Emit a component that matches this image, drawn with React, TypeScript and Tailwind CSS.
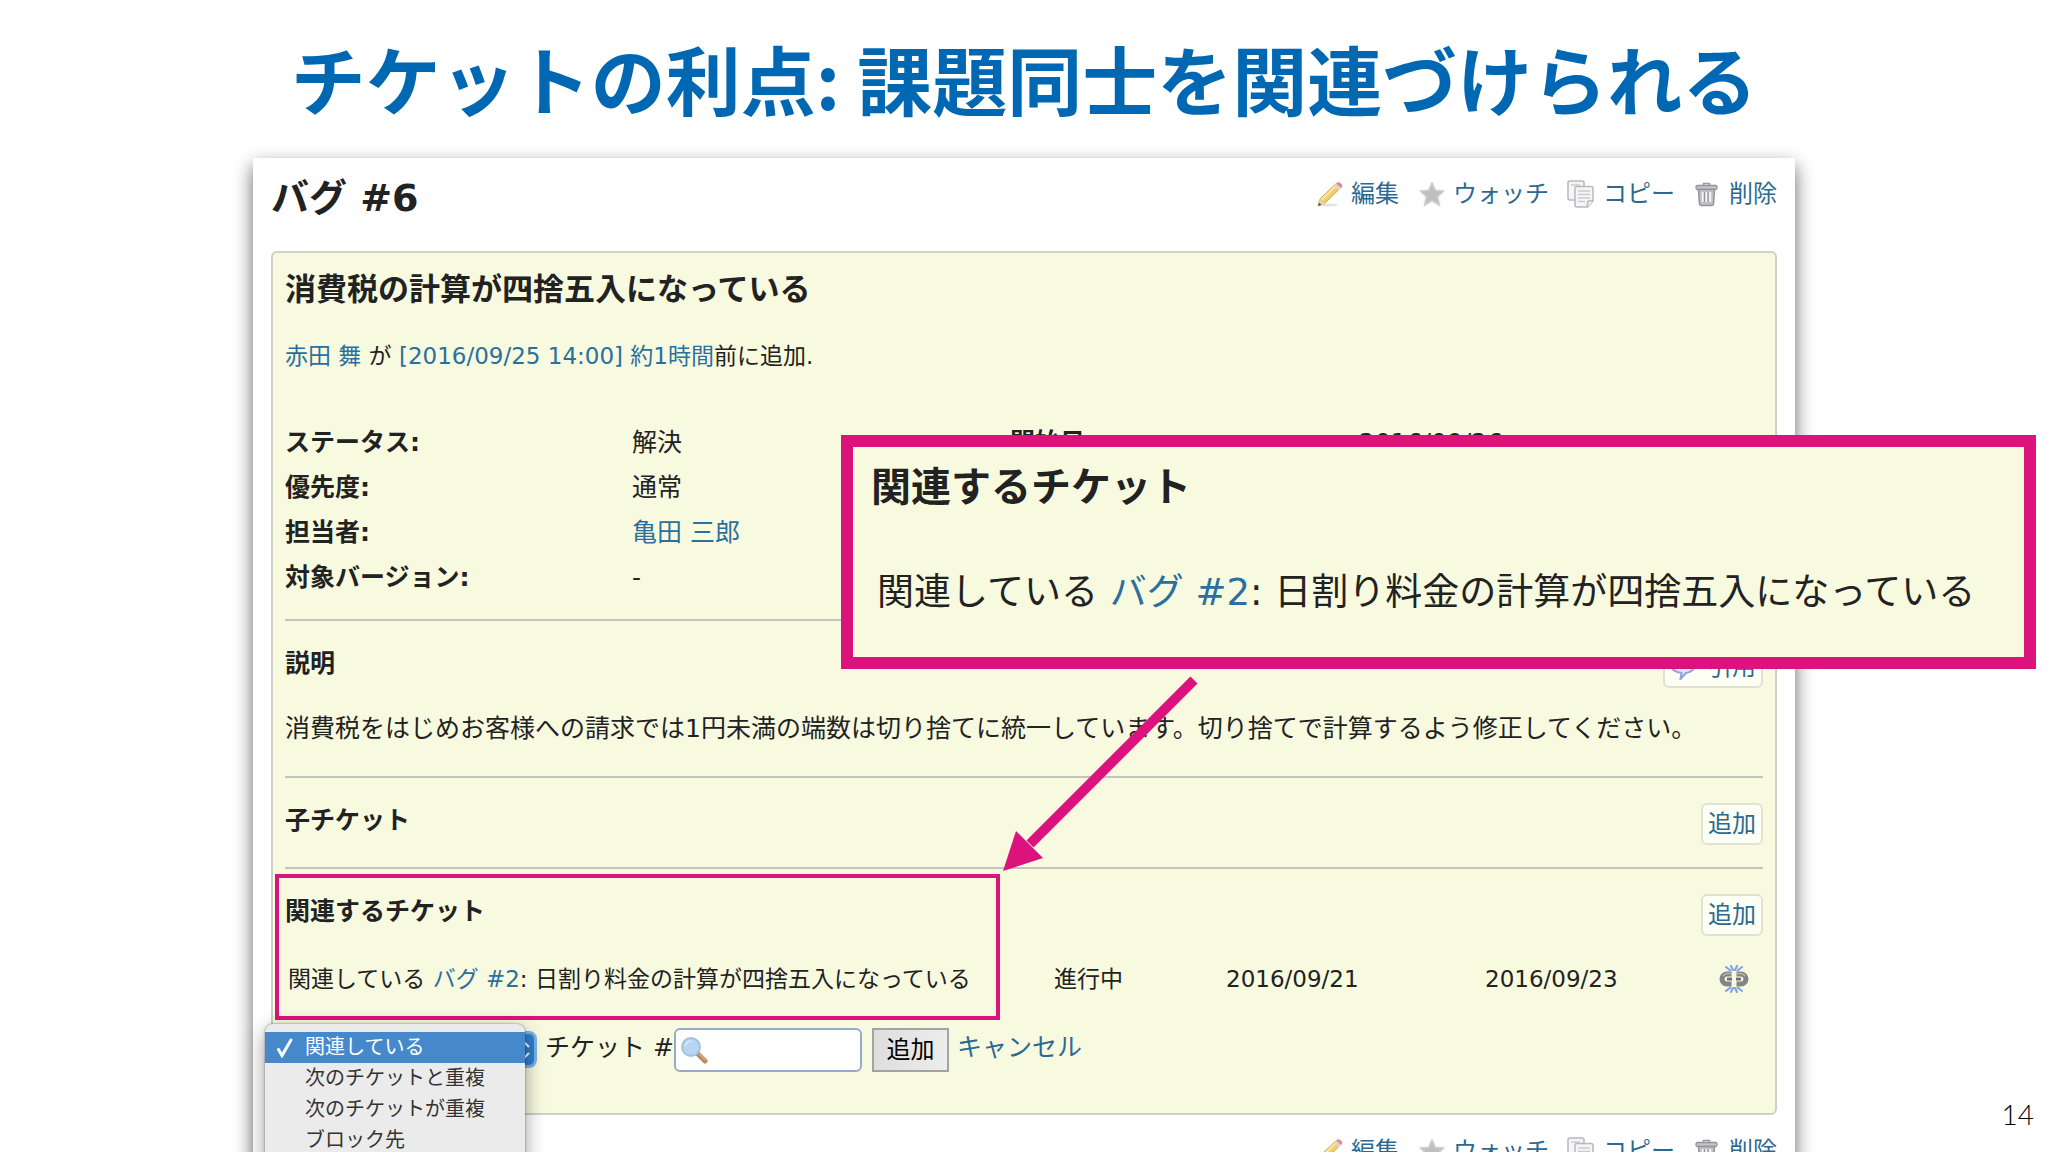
import type { ReactNode } from "react";

const ATTRIBUTES = [
  { label: "ステータス:", value: "解決", label2: "開始日:", value2: "2016/09/26" },
  { label: "優先度:", value: "通常" },
  { label: "担当者:", value: "亀田 三郎", link: true },
  { label: "対象バージョン:", value: "-" },
];

const RELATION_TYPES = [
  "関連している",
  "次のチケットと重複",
  "次のチケットが重複",
  "ブロック先",
];

function PencilIcon() {
  return (
    <svg viewBox="0 0 26 26" className="size-[26px]" aria-hidden="true">
      <ellipse cx="13" cy="24" rx="8" ry="1.5" fill="#e4e2e0" />
      <path d="M1 25l2-7L18.500 3l4.500 4.500L7.500 22.500z" fill="#f0cf66" stroke="#c9a660" />
      <path d="M4.500 19L19 4.500" stroke="#fbe9a0" strokeWidth="2" />
      <path d="M1 25l2-7 4.500 4.500z" fill="#e6d3b0" />
      <path d="M1 25l1-3.500 2.500 2.500z" fill="#5d5a55" />
      <path d="M17 4.500L19 2.500l5 4.500-2.300 2.300z" fill="#d9d5d3" />
      <path d="M19 2.500q1.500-2 3.500-1l2.500 2q1 1.500-.8 3.700z" fill="#f0808a" />
    </svg>
  );
}

function StarIcon() {
  return (
    <svg viewBox="0 0 26 26" className="size-[26px]" aria-hidden="true">
      <path
        d="M13 1.500l3.500 7.700 8.500.8-6.300 5.700 2 8.800L13 19.800l-7.700 4.700 2-8.800L1 10l8.500-.8z"
        fill="#bfbfc1"
        stroke="#d2d2d4"
        strokeWidth="1.500"
        strokeLinejoin="round"
      />
    </svg>
  );
}

function CopyIcon() {
  return (
    <svg viewBox="1 0 26 28" className="h-7 w-[26px] overflow-visible" aria-hidden="true">
      <g fill="#f5f5f6" stroke="#b9b9bc" strokeWidth="1.500">
        <rect x="0" y="1" width="16" height="19" rx="2" />
        <path d="M9 6.500h14a2 2 0 0 1 2 2V21l-5.500 6H9a2 2 0 0 1-2-2V8.500a2 2 0 0 1 2-2z" />
        <path d="M25 21h-4a1.500 1.500 0 0 0-1.500 1.500V27" />
      </g>
      <path d="M10 11h12M10 14.500h12M10 18h12M10 21.500h7M3 5h9" stroke="#cbcbce" strokeWidth="1.300" />
    </svg>
  );
}

function TrashIcon() {
  return (
    <svg viewBox="1.500 0 26 26" className="size-[26px]" aria-hidden="true">
      <path d="M10 4.500V2.500h6v2" fill="none" stroke="#98989e" strokeWidth="1.500" />
      <rect x="2.500" y="4.500" width="21" height="4" rx="1.500" fill="#c5c5c9" stroke="#93939a" strokeWidth="1.300" />
      <path d="M5 8.500h16l-1 14.500a2 2 0 0 1-2 1.500H8A2 2 0 0 1 6 23z" fill="#c0c0c5" stroke="#93939a" strokeWidth="1.500" />
      <path d="M9.300 11v10M13 11v10M16.700 11v10" stroke="#f5f5f6" strokeWidth="2" />
      <path d="M10.800 11v10M14.500 11v10" stroke="#8d8d94" />
    </svg>
  );
}

function CommentIcon() {
  return (
    <svg viewBox="0 0 26 26" className="size-[26px]" aria-hidden="true">
      <path
        d="M13 2c8 0 12 3.500 12 8.500S20 18.500 16 19l-5.500 6 1-6C5 18 1 15.500 1 10.500S5 2 13 2z"
        fill="#dfe4f8"
        stroke="#8fa3dc"
        strokeWidth="2"
      />
    </svg>
  );
}

function UnlinkIcon() {
  return (
    <svg viewBox="0 0 30 28" className="h-7 w-[30px]" aria-hidden="true">
      <g fill="none">
        <path d="M12.500 9H8a5 5 0 0 0 0 10h4.500M17.500 9H22a5 5 0 0 1 0 10h-4.500" stroke="#858585" strokeWidth="5" />
        <path d="M12 8.500H8A5.500 5.500 0 0 0 4 11M18 8.500h4a5.500 5.500 0 0 1 4 2.500" stroke="#b5b5b4" strokeWidth="1.500" />
        <path d="M8 14h5M17 14h5" stroke="#6f6f6f" strokeWidth="3" />
        <path d="M8 12.300h5M17 12.300h5" stroke="#c9c9c5" />
        <path
          d="M11.500 5.500L7 2M14 5l-2-4M16 5l2-4M18.500 5.500L23 2M11.500 22.500L7 26M14 23l-2 4M16 23l2 4M18.500 22.500L23 26"
          stroke="#7ba0e6"
          strokeWidth="2"
          strokeLinecap="round"
        />
      </g>
    </svg>
  );
}

function MagnifierIcon() {
  return (
    <svg viewBox="0 0 28 28" className="size-7" aria-hidden="true">
      <path d="M18 18l7 7" stroke="#b98a63" strokeWidth="5" strokeLinecap="round" />
      <path d="M19.500 18l5.500 5.500" stroke="#dbb08a" strokeWidth="1.500" strokeLinecap="round" />
      <circle cx="11" cy="11" r="9" fill="#b4d6f4" stroke="#a9bfda" strokeWidth="2" />
      <path d="M5.500 10a6 6 0 0 1 6-5" fill="none" stroke="#d8ebfb" strokeWidth="2" />
    </svg>
  );
}

const ACTIONS = [
  { label: "編集", icon: <PencilIcon /> },
  { label: "ウォッチ", icon: <StarIcon /> },
  { label: "コピー", icon: <CopyIcon /> },
  { label: "削除", icon: <TrashIcon /> },
];

function Contextual() {
  return (
    <nav className="flex gap-5 text-2xl leading-12">
      {ACTIONS.map((action) => (
        <a key={action.label} href="#" className="flex items-center gap-2 text-[#2a6a92]">
          {action.icon}
          {action.label}
        </a>
      ))}
    </nav>
  );
}

function SmallButton({ children }: { children: ReactNode }) {
  return (
    <button
      type="button"
      className="flex h-[42px] items-center gap-3 rounded-md border-2 border-[#e0e2cf] bg-[#fdfef4] px-[5px] text-2xl leading-8 text-[#2a6a92]"
    >
      {children}
    </button>
  );
}

function SectionHeader({ title, children }: { title: string; children: ReactNode }) {
  return (
    <div className="flex items-start justify-between">
      <h4 className="text-[25px] leading-9 font-bold">{title}</h4>
      {children}
    </div>
  );
}

function RelatedIssue() {
  return (
    <>
      関連している{" "}
      <a href="#" className="text-[#2a6f9e]">
        バグ #2
      </a>
      : 日割り料金の計算が四捨五入になっている
    </>
  );
}

function RelationForm() {
  return (
    <form className="mt-[33px] flex h-11 text-[25px] leading-10">
      <div className="relative w-[252px]">
        <select
          aria-label="関連の種類"
          className="mt-0.5 h-[37px] w-full appearance-none rounded-lg border-3 border-[#7db3e6] bg-[#2f7fd0] text-xl text-white"
        >
          {RELATION_TYPES.map((type) => (
            <option key={type}>{type}</option>
          ))}
        </select>
        <svg viewBox="0 0 12 20" className="absolute top-3 right-1.5 h-5 w-3" aria-hidden="true">
          <path d="M2 7l4-4 4 4M2 13l4 4 4-4" fill="none" stroke="#fff" strokeWidth="2" />
        </svg>
        <ul className="absolute -top-1 -left-5 z-10 w-[260px] rounded-lg bg-[#ebebeb] pt-2 pb-5 text-xl leading-[31px] text-[#333] shadow-[0_6px_20px_rgba(0,0,0,0.4),0_0_2px_rgba(0,0,0,0.5)]">
          {RELATION_TYPES.map((type, i) => (
            <li
              key={type}
              className={
                i === 0
                  ? "flex items-center bg-[#4589cb] text-white"
                  : "flex items-center"
              }
            >
              <span className="flex w-10 justify-center">
                {i === 0 && (
                  <svg viewBox="0 0 18 20" className="h-5 w-[18px]" aria-hidden="true">
                    <path d="M2.500 11.500l3.500 6L15 2" fill="none" stroke="#fff" strokeWidth="3" strokeLinecap="round" />
                  </svg>
                )}
              </span>
              {type}
            </li>
          ))}
        </ul>
      </div>
      <label htmlFor="issue-to" className="ml-2 whitespace-nowrap">
        チケット #
      </label>
      <span className="relative">
        <input
          id="issue-to"
          className="h-11 w-[188px] rounded-md border-2 border-[#93aacb] bg-white pl-10"
        />
        <span className="absolute top-2 left-1.5">
          <MagnifierIcon />
        </span>
      </span>
      <button
        type="button"
        className="ml-2.5 h-11 w-[77px] border-2 border-[#a3a3a3] bg-linear-to-r from-[#dedede] to-[#ededed] text-2xl leading-10 text-black"
      >
        追加
      </button>
      <a href="#" className="ml-2 text-[#2a6a92]">
        キャンセル
      </a>
    </form>
  );
}

function IssueBox() {
  return (
    <article className="rounded-md border-2 border-[#cfd0c6] bg-[#f8fae0] px-3 pt-4 pb-[41px]">
      <h3 className="text-[31px] leading-10 font-bold">
        消費税の計算が四捨五入になっている
      </h3>
      <p className="mt-[31px] text-[23px] leading-8">
        <a href="#" className="text-[#2a6f9e]">赤田 舞</a> が{" "}
        <a href="#" className="text-[#2a6f9e]">[2016/09/25 14:00]</a>{" "}
        <a href="#" className="text-[#2a6f9e]">約1時間</a>前に追加.
      </p>

      <table className="mt-12 w-full table-fixed text-left text-[25px] leading-[45px]">
        <colgroup>
          <col className="w-[347px]" />
          <col className="w-[378px]" />
          <col className="w-[349px]" />
          <col />
        </colgroup>
        <tbody>
          {ATTRIBUTES.map((row) => (
            <tr key={row.label}>
              <th className="p-0">{row.label}</th>
              <td className="p-0">
                {row.link ? (
                  <a href="#" className="text-[#2a6f9e]">{row.value}</a>
                ) : (
                  row.value
                )}
              </td>
              <th className="p-0">{row.label2}</th>
              <td className="p-0">{row.value2}</td>
            </tr>
          ))}
        </tbody>
      </table>

      <section className="mt-[19px] border-t-2 border-[#c3c4bd] pt-[25px] pb-[31px]">
        <SectionHeader title="説明">
          <SmallButton>
            <CommentIcon />
            引用
          </SmallButton>
        </SectionHeader>
        <p className="mt-[25px] text-[25px] leading-8">
          消費税をはじめお客様への請求では1円未満の端数は切り捨てに統一しています。切り捨てで計算するよう修正してください。
        </p>
      </section>

      <section className="border-t-2 border-[#c3c4bd] pt-[25px] pb-[22px]">
        <SectionHeader title="子チケット">
          <SmallButton>追加</SmallButton>
        </SectionHeader>
      </section>

      <section className="relative border-t-2 border-[#c3c4bd] pt-[25px]">
        <SectionHeader title="関連するチケット">
          <SmallButton>追加</SmallButton>
        </SectionHeader>
        <table className="mt-[27px] w-full table-fixed text-left text-[23px] leading-8">
          <tbody>
            <tr>
              <td className="w-[769px] p-0 pl-[3px] whitespace-nowrap">
                <RelatedIssue />
              </td>
              <td className="w-[172px] p-0">進行中</td>
              <td className="w-[259px] p-0">2016/09/21</td>
              <td className="p-0">2016/09/23</td>
              <td className="w-12 p-0">
                <a href="#" aria-label="関連の削除" className="flex h-8 items-center pl-1">
                  <UnlinkIcon />
                </a>
              </td>
            </tr>
          </tbody>
        </table>
        {/* highlight around the related issue */}
        <div className="absolute top-[5px] -left-2.5 h-[146px] w-[725px] border-4 border-[#dc127d]" />
        <RelationForm />
      </section>
    </article>
  );
}

function Callout() {
  return (
    <aside className="absolute top-[435px] right-3 left-[841px] h-[234px] border-12 border-[#dc127d] bg-[#f8fae0] pt-3 pl-[18px] whitespace-nowrap">
      <h4 className="text-[40px] leading-14 font-bold">関連するチケット</h4>
      <p className="mt-[50px] pl-1.5 text-[37px] leading-14">
        <RelatedIssue />
      </p>
    </aside>
  );
}

function Arrow() {
  return (
    <svg viewBox="0 0 196 196" className="absolute top-[676px] left-[1002px] size-[196px]" aria-hidden="true">
      <path d="M192 4L28 168" stroke="#dc127d" strokeWidth="10" />
      <path d="M1 195L14 155l27 27z" fill="#dc127d" />
    </svg>
  );
}

export default function App() {
  return (
    <main
      lang="ja"
      className="relative h-screen overflow-hidden bg-white font-['DejaVu_Sans','Noto_Sans_CJK_JP',sans-serif] text-[#222]"
    >
      <h1 className="pt-6 pb-[26px] text-center font-['Noto_Sans_CJK_JP',sans-serif] text-[75px] leading-[108px] font-bold text-[#0068b2]">
        チケットの利点: 課題同士を関連づけられる
      </h1>

      <div className="mx-[253px] bg-white px-[18px] pt-3 pb-8 shadow-[0_8px_18px_rgba(0,0,0,0.6)]">
        <header className="mb-[25px] flex items-start justify-between">
          <h2 className="text-[38px] leading-14 font-bold">バグ #6</h2>
          <Contextual />
        </header>
        <IssueBox />
        <footer className="mt-3 flex justify-end">
          <Contextual />
        </footer>
      </div>

      <Callout />
      <Arrow />
      <span className="absolute right-3.5 bottom-[22px] font-['Lato',sans-serif] text-[28px] leading-8 font-light text-black">
        14
      </span>
    </main>
  );
}
